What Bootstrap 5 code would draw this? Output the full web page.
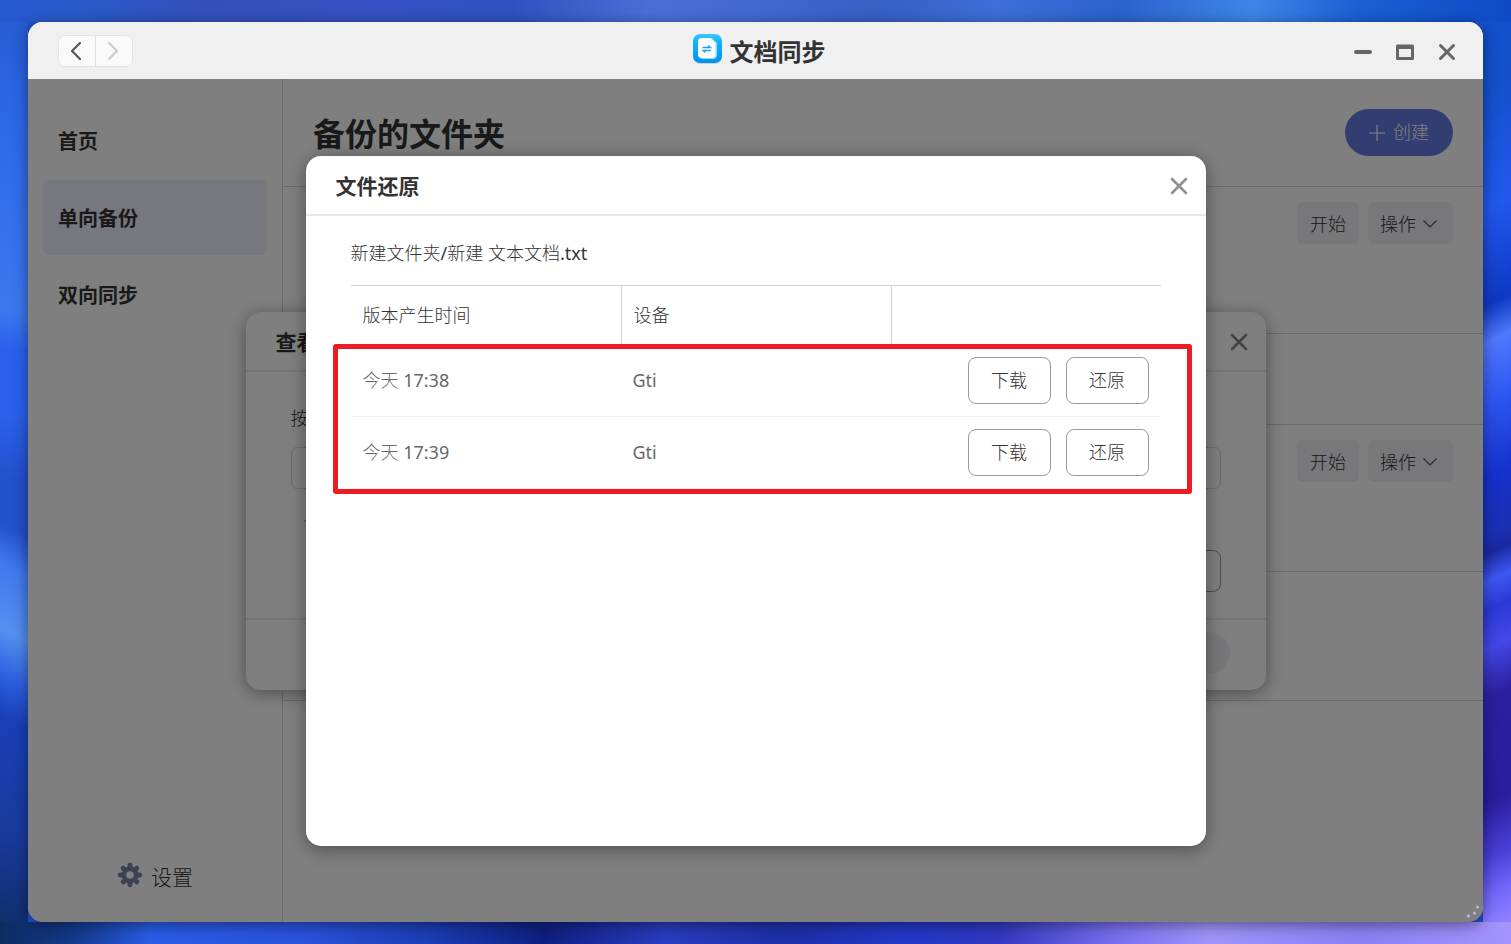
<!DOCTYPE html>
<html lang="zh-CN">
<head>
<meta charset="utf-8">
<meta name="viewport" content="width=device-width, initial-scale=1">
<title>文档同步</title>
<link href="https://cdn.jsdelivr.net/npm/bootstrap@5.3.0/dist/css/bootstrap.min.css" rel="stylesheet">
<style>
  body {
    font-family: "Noto Sans", "Noto Sans CJK SC", sans-serif;
    font-size: 18px;
    line-height: 27px;
    font-weight: 300;
    color: #333;
    min-height: 100vh;
    padding: 22px 28px;
    background:
      linear-gradient(90deg, #2559d0, #2a58c8 6%, #3350ba 14%, #3552c4 24%, #2f52c0 34%, #4a6ed8 43%, #4169d2 50%, #3560c4 58%, #3f6ed8 66%, #2b62cc 74%, #3c86e6 83%, #1a5fd4 90%, #0e4ac6) top / 100% 22px no-repeat,
      linear-gradient(90deg, #0c2c62, #143a8c 5%, #2a5ce8 10%, #2a52dc 20%, #1c3fb8 28%, #0f1f80 36%, #2a3cc0 44%, #1e2fa8 52%, #2438c8 60%, #3038c0 66%, #7a70f0 74%, #a094fa 80%, #8c80f4 90%, #a494fc) bottom / 100% 22px no-repeat,
      linear-gradient(188deg, #2559d0, #2b68e8 12%, #3c78f0 33%, #2a62ee 37%, #2a60ec 44%, #2350cc 51%, transparent 57%) left / 28px 100% no-repeat,
      linear-gradient(208deg, #2350cc 56%, #4078ee 60%, #5590f0 67%, #2c5ee0 72%, #1a40b8 76%, #183a9c 88%, #0d2c60) left / 28px 100% no-repeat,
      linear-gradient(155deg, #0f50cc, #1550cc 10%, #2258ee 22%, #0e38c4 32%, #5078fc 36%, #3058f4 42%, #1432cc 50%, #1a30b4 56%, #1a28a0 58%, #3c58f0 61%, #2c38d4 64%, #4448e8 68%, #2c20a0 73%, #2a1c9c 84%, #4a40d8 90%, #7468fc 94%, #a494fc) right / 28px 100% no-repeat,
      #2450cc;
  }
  h1, h2, h3 { font-weight: 700; margin: 0; color: #333; }
  button { font-weight: inherit; }
  .app-window {
    min-height: calc(100vh - 44px);
    border-radius: 15px;
    overflow: hidden;
    background: #fff;
    box-shadow: 0 3px 15px rgba(0, 0, 0, .45);
  }
  .title-bar { height: 57px; padding: 0 24px 0 30px; background: #f0f0f0; }
  .title-bar h1 { font-size: 24px; line-height: 36px; padding-top: 2px; }
  .app-icon { margin-bottom: 4px; }
  .title-side { flex: 1 1 0; }
  .window-tools { gap: 18px; padding-top: 2px; }
  .history-nav { border: 1px solid #e4e4e4; border-radius: 7px; background: #fafafa; overflow: hidden; }
  .history-nav button { width: 36px; height: 30px; border: 0; padding: 0 2px 2px 0; background: none; }
  .history-nav button + button { width: 37px; border-left: 1px solid #e0e0e0; }
  .plain-btn { border: 0; background: none; padding: 0; width: 24px; height: 24px; display: flex; align-items: center; justify-content: center; }
  .side-bar { width: 255px; flex: none; border-right: 1px solid #d6d6d6; padding: 24px 15px 30px; }
  .side-link { height: 75px; padding: 2px 15px 0; border-radius: 6px; font-size: 20px; font-weight: 700; color: #333; text-decoration: none; }
  .side-link.active { background: #eef; }
  .settings-link { font-size: 21px; color: #333; text-decoration: none; }
  .page-head { height: 108px; padding: 0 30px; border-bottom: 1px solid #d6d6d6; }
  .page-head h2 { font-size: 32px; line-height: 48px; padding-top: 2px; }
  .create-btn { width: 108px; height: 47px; border: 0; border-radius: 24px; background: #647ce2; color: #fff; }
  .task-row { height: 147px; padding: 15px 30px; gap: 9px; border-bottom: 1px solid #d6d6d6; }
  .task-row.short { height: 91px; }
  .task-row.last { height: 129px; }
  .soft-btn { min-width: 62px; height: 42px; padding: 2px 12px 0; border: 0; border-radius: 6px; background: #f1f1f7; color: #333; }
  .soft-btn.with-menu { min-width: 85px; gap: 7px; }
  .layer { position: absolute; inset: 0; display: flex; align-items: center; justify-content: center; }
  .dim { background: rgba(0, 0, 0, .5); }
  .dialog-box { background: #fff; border-radius: 15px; box-shadow: 0 3px 18px rgba(0, 0, 0, .4); display: flex; flex-direction: column; max-width: 100%; }
  .dialog-box header { height: 60px; padding: 2px 15px 0 30px; border-bottom: 2px solid #e8e8e8; }
  .dialog-box header h3 { font-size: 21px; line-height: 32px; }
  .browse-box { width: 1020px; }
  .browse-body { height: 246px; padding: 33px 45px 0; }
  .search-input { display: block; height: 42px; border: 1px solid #d9d9d9; border-radius: 6px; background: #fff; width: 100%; margin-top: 15px; }
  .tree-row { height: 61px; padding: 8px 8px 0; }
  .version-btn { height: 42px; width: 83px; border: 1px solid #999; border-radius: 8px; background: #fff; }
  .browse-box footer { height: 72px; padding: 0 36px 4px; border-top: 2px solid #e8e8e8; }
  .pill-btn { width: 108px; height: 42px; border: 0; border-radius: 21px; background: #f1f1f7; }
  .restore-box { width: 900px; height: 690px; }
  .restore-body { padding: 24px 45px; }
  .restore-body p { margin-bottom: 18px; }
  .version-table { width: 100%; table-layout: fixed; border-collapse: separate; border-spacing: 0; border-top: 1px solid #d2d2d2; }
  .version-table th { height: 59px; padding: 0 12px; font-weight: 300; }
  .version-table th + th { border-left: 1px solid #d2d2d2; }
  .version-table td { height: 72px; padding: 0 12px; color: #666; border-bottom: 1px solid #f0f0f0; }
  .row-actions { gap: 15px; }
  .row-btn { width: 83px; height: 47px; border: 1px solid #999; border-radius: 8px; background: #fff; color: #333; padding: 0; }
  .red-frame { position: absolute; inset: 59px -31px -5px -18px; border: 5px solid #ed1c24; border-radius: 3px; pointer-events: none; }
  .resize-grip { position: absolute; right: 3px; bottom: 3px; }
</style>
</head>
<body>
<div class="app-window d-flex flex-column">
  <div class="title-bar d-flex align-items-center">
    <div class="title-side">
      <div class="history-nav d-inline-flex align-middle">
        <button type="button" aria-label="后退"><svg width="14" height="20" viewBox="0 0 14 20" fill="none" stroke="#555" stroke-width="2.200" stroke-linecap="round" stroke-linejoin="round"><path d="M11 2 3 10l8 8"/></svg></button>
        <button type="button" aria-label="前进"><svg width="14" height="20" viewBox="0 0 14 20" fill="none" stroke="#ccc" stroke-width="2.200" stroke-linecap="round" stroke-linejoin="round"><path d="m3 2 8 8-8 8"/></svg></button>
      </div>
    </div>
    <div class="d-flex align-items-center gap-2">
      <svg class="app-icon" width="30" height="32" viewBox="0 0 30 32">
        <defs>
          <linearGradient id="appBlue" x1="0" y1="0" x2="0" y2="1"><stop offset="0" stop-color="#3fc6fb"/><stop offset=".3" stop-color="#0ab4fa"/><stop offset="1" stop-color="#0590ee"/></linearGradient>
        </defs>
        <rect x="1" y="2" width="29" height="29" rx="7" fill="#9aa" opacity=".4"/>
        <rect x="1" y="1" width="29" height="29" rx="7" fill="url(#appBlue)"/>
        <path d="M10 5h10l5 5v12a4 4 0 0 1-4 4H11a5 5 0 0 1-5-5V9a4 4 0 0 1 4-4z" fill="#8fdcfd"/>
        <path d="M10 5h8.500l5 5v11a4 4 0 0 1-4 4H10a4 4 0 0 1-4-4V9a4 4 0 0 1 4-4z" fill="#fff"/>
        <path d="M10.500 14.500h8l-2.500-2M19 17.500h-8l2.500 2" fill="none" stroke="#1ba3f3" stroke-width="1.300"/>
      </svg>
      <h1>文档同步</h1>
    </div>
    <div class="title-side window-tools d-flex justify-content-end">
      <button type="button" class="plain-btn" aria-label="最小化"><svg width="18" height="18" viewBox="0 0 18 18"><rect y="7" width="18" height="4" rx="2" fill="#666"/></svg></button>
      <button type="button" class="plain-btn" aria-label="最大化"><svg width="18" height="18" viewBox="0 0 18 18"><path fill-rule="evenodd" d="M1.500 1.500h15A1.500 1.500 0 0 1 18 3v12.500a1.500 1.500 0 0 1-1.500 1.500h-15A1.500 1.500 0 0 1 0 15.500V3a1.500 1.500 0 0 1 1.500-1.500zM3 6v8h12V6z" fill="#666"/></svg></button>
      <button type="button" class="plain-btn" aria-label="关闭"><svg width="18" height="18" viewBox="0 0 18 18" stroke="#666" stroke-width="3" stroke-linecap="round"><path d="m2.500 2.500 13 13m0-13-13 13"/></svg></button>
    </div>
  </div>

  <div class="position-relative flex-grow-1 d-flex">
    <nav class="side-bar d-flex flex-column">
      <div class="d-flex flex-column" style="gap:2px">
        <a href="#" class="side-link d-flex align-items-center">首页</a>
        <a href="#" class="side-link active d-flex align-items-center">单向备份</a>
        <a href="#" class="side-link d-flex align-items-center">双向同步</a>
      </div>
      <a href="#" class="settings-link d-flex align-items-center justify-content-center gap-2 mt-auto">
        <svg class="mb-1" width="26" height="26" viewBox="0 0 24 24" fill="#7b82a6"><path fill-rule="evenodd" d="M12 4.200a7.800 7.800 0 1 0 0 15.600 7.800 7.800 0 0 0 0-15.600zm0 4.300a3.500 3.500 0 1 1 0 7 3.500 3.500 0 0 1 0-7z"/><g stroke="#7b82a6" stroke-width="4.600" stroke-linecap="round"><path d="M12 3v2.500M12 18.500V21M3 12h2.500M18.500 12H21M5.700 5.700l1.500 1.500M16.800 16.800l1.500 1.500M5.700 18.300l1.500-1.500M16.800 7.200l1.500-1.500"/></g></svg>
        <span>设置</span>
      </a>
    </nav>

    <main class="flex-grow-1">
      <div class="page-head d-flex align-items-center justify-content-between">
        <h2>备份的文件夹</h2>
        <button type="button" class="create-btn d-flex align-items-center justify-content-center gap-2"><svg width="16" height="16" viewBox="0 0 16 16" stroke="#fff" stroke-width="1.200"><path d="M8 0v16M0 8h16"/></svg>创建</button>
      </div>
      <div class="task-row d-flex justify-content-end align-items-start">
        <button type="button" class="soft-btn">开始</button>
        <button type="button" class="soft-btn with-menu d-flex align-items-center">操作<svg width="14" height="14" viewBox="0 0 14 14" fill="none" stroke="#555" stroke-width="1.200"><path d="m.5 3.500 6.500 6.500 6.500-6.500"/></svg></button>
      </div>
      <div class="task-row short"></div>
      <div class="task-row d-flex justify-content-end align-items-start">
        <button type="button" class="soft-btn">开始</button>
        <button type="button" class="soft-btn with-menu d-flex align-items-center">操作<svg width="14" height="14" viewBox="0 0 14 14" fill="none" stroke="#555" stroke-width="1.200"><path d="m.5 3.500 6.500 6.500 6.500-6.500"/></svg></button>
      </div>
      <div class="task-row last"></div>
    </main>

    <div class="layer">
      <section class="dialog-box browse-box">
        <header class="d-flex align-items-center justify-content-between">
          <h3>查看</h3>
          <button type="button" class="plain-btn" aria-label="关闭"><svg width="18" height="18" viewBox="0 0 18 18" stroke="#84848c" stroke-width="2.600" stroke-linecap="round"><path d="m2 2 14 14m0-14L2 16"/></svg></button>
        </header>
        <div class="browse-body">
          <label for="fileSearch" class="d-block">按</label>
          <input id="fileSearch" type="text" class="search-input">
          <div class="tree-row d-flex align-items-center">
            <svg width="16" height="12" viewBox="0 0 16 12"><path d="M4.500 3h11L10 9z" fill="#bbb"/></svg>
          </div>
          <div class="d-flex justify-content-end"><button type="button" class="version-btn" aria-label="版本"></button></div>
        </div>
        <footer class="d-flex align-items-center justify-content-end"><button type="button" class="pill-btn" aria-label="取消"></button></footer>
      </section>
    </div>

    <div class="layer dim">
      <section class="dialog-box restore-box">
        <header class="d-flex align-items-center justify-content-between">
          <h3>文件还原</h3>
          <button type="button" class="plain-btn" aria-label="关闭"><svg width="18" height="18" viewBox="0 0 18 18" stroke="#8f8f99" stroke-width="2.600" stroke-linecap="round"><path d="m2 2 14 14m0-14L2 16"/></svg></button>
        </header>
        <div class="restore-body">
          <p>新建文件夹<span class="fw-normal">/</span>新建 文本文档<span class="fw-normal">.txt</span></p>
          <div class="position-relative">
            <table class="version-table">
              <thead>
                <tr><th scope="col">版本产生时间</th><th scope="col">设备</th><th></th></tr>
              </thead>
              <tbody>
                <tr>
                  <td>今天 <span class="fw-normal">17:38</span></td><td class="fw-normal">Gti</td>
                  <td><div class="row-actions d-flex justify-content-end"><button type="button" class="row-btn">下载</button><button type="button" class="row-btn">还原</button></div></td>
                </tr>
                <tr>
                  <td>今天 <span class="fw-normal">17:39</span></td><td class="fw-normal">Gti</td>
                  <td><div class="row-actions d-flex justify-content-end"><button type="button" class="row-btn">下载</button><button type="button" class="row-btn">还原</button></div></td>
                </tr>
              </tbody>
            </table>
            <div class="red-frame"></div>
          </div>
        </div>
      </section>
    </div>

    <svg class="resize-grip" width="14" height="14" viewBox="0 0 14 14" fill="#b8bedc"><circle cx="11.500" cy="2" r="1.500"/><circle cx="8.500" cy="8" r="1.500"/><circle cx="2.500" cy="11" r="1.500"/></svg>
  </div>
</div>
<script src="https://cdn.jsdelivr.net/npm/bootstrap@5.3.0/dist/js/bootstrap.bundle.min.js"></script>
</body>
</html>
